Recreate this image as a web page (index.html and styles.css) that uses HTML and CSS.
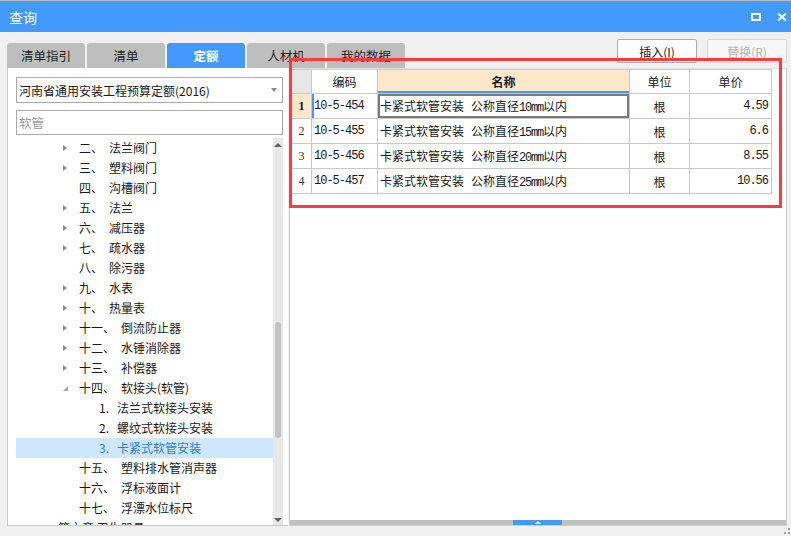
FILE: index.html
```html
<!DOCTYPE html>
<html lang="zh-CN">
<head>
<meta charset="utf-8">
<title>查询</title>
<link rel="stylesheet" href="styles.css">
</head>
<body>
<div class="window">
  <div class="titlebar">
    <span class="title">查询</span>
    <div class="win-ctrls">
      <svg class="ico" width="10" height="8" viewBox="0 0 10 8"><rect x="1" y="1" width="8" height="6" fill="none" stroke="#fff" stroke-width="2"/></svg>
      <svg class="ico" width="10" height="8" viewBox="0 0 10 8"><path d="M1 0.5 L9 7.5 M9 0.5 L1 7.5" stroke="#fff" stroke-width="2" fill="none"/></svg>
    </div>
  </div>

  <div class="toolbar">
    <div class="tabs">
      <div class="tab">清单指引</div>
      <div class="tab">清单</div>
      <div class="tab active">定额</div>
      <div class="tab">人材机</div>
      <div class="tab">我的数据</div>
    </div>
    <div class="btns">
      <button class="btn">插入(I)</button>
      <button class="btn disabled">替换(R)</button>
    </div>
  </div>

  <div class="main">
    <div class="left">
      <div class="select"><span>河南省通用安装工程预算定额(2016)</span><span class="caret"></span></div>
      <div class="search">软管</div>
      <div class="tree">
        <div class="tree-list">
          <div class="row l1"><span class="arr"></span><span class="num">二、</span><span>法兰阀门</span></div>
          <div class="row l1"><span class="arr"></span><span class="num">三、</span><span>塑料阀门</span></div>
          <div class="row l1"><span class="arr none"></span><span class="num">四、</span><span>沟槽阀门</span></div>
          <div class="row l1"><span class="arr"></span><span class="num">五、</span><span>法兰</span></div>
          <div class="row l1"><span class="arr"></span><span class="num">六、</span><span>减压器</span></div>
          <div class="row l1"><span class="arr"></span><span class="num">七、</span><span>疏水器</span></div>
          <div class="row l1"><span class="arr none"></span><span class="num">八、</span><span>除污器</span></div>
          <div class="row l1"><span class="arr"></span><span class="num">九、</span><span>水表</span></div>
          <div class="row l1"><span class="arr"></span><span class="num">十、</span><span>热量表</span></div>
          <div class="row l1"><span class="arr"></span><span class="num">十一、</span><span>倒流防止器</span></div>
          <div class="row l1"><span class="arr"></span><span class="num">十二、</span><span>水锤消除器</span></div>
          <div class="row l1"><span class="arr"></span><span class="num">十三、</span><span>补偿器</span></div>
          <div class="row l1"><span class="arr open"></span><span class="num">十四、</span><span>软接头(软管)</span></div>
          <div class="row l2"><span class="cnum">1.</span><span>法兰式软接头安装</span></div>
          <div class="row l2"><span class="cnum">2.</span><span>螺纹式软接头安装</span></div>
          <div class="row l2 selected"><span class="cnum">3.</span><span>卡紧式软管安装</span></div>
          <div class="row l1"><span class="arr none"></span><span class="num">十五、</span><span>塑料排水管消声器</span></div>
          <div class="row l1"><span class="arr none"></span><span class="num">十六、</span><span>浮标液面计</span></div>
          <div class="row l1"><span class="arr none"></span><span class="num">十七、</span><span>浮漂水位标尺</span></div>
          <div class="row l0"><span>第六章 卫生器具</span></div>
        </div>
        <div class="vscroll">
          <span class="vup"></span>
          <div class="vtrack"><div class="vthumb"></div></div>
          <span class="vdown"></span>
        </div>
      </div>
    </div>

    <div class="right">
      <table class="grid">
        <colgroup><col class="c-rn"><col class="c-code"><col class="c-name"><col class="c-unit"><col class="c-price"></colgroup>
        <thead>
          <tr><th class="rn"></th><th>编码</th><th class="name">名称</th><th>单位</th><th>单价</th></tr>
        </thead>
        <tbody>
          <tr class="cur"><td class="rn">1</td><td class="code">10-5-454</td><td class="nm">卡紧式软管安装<span class="gap"></span>公称直径<span class="lat">10mm</span>以内</td><td class="unit">根</td><td class="price">4.59</td></tr>
          <tr><td class="rn">2</td><td class="code">10-5-455</td><td class="nm">卡紧式软管安装<span class="gap"></span>公称直径<span class="lat">15mm</span>以内</td><td class="unit">根</td><td class="price">6.6</td></tr>
          <tr><td class="rn">3</td><td class="code">10-5-456</td><td class="nm">卡紧式软管安装<span class="gap"></span>公称直径<span class="lat">20mm</span>以内</td><td class="unit">根</td><td class="price">8.55</td></tr>
          <tr><td class="rn">4</td><td class="code">10-5-457</td><td class="nm">卡紧式软管安装<span class="gap"></span>公称直径<span class="lat">25mm</span>以内</td><td class="unit">根</td><td class="price">10.56</td></tr>
        </tbody>
      </table>
      <div class="fill"></div>
      <div class="hscroll"><div class="hthumb"><span class="hup"></span></div></div>
    </div>
  </div>

  <div class="redbox"></div>
  <svg class="grip" width="6" height="6" viewBox="0 0 6 6"><rect x="4" y="0" width="2" height="2" fill="#a0a0a0"/><rect x="0" y="4" width="2" height="2" fill="#a0a0a0"/><rect x="4" y="4" width="2" height="2" fill="#a0a0a0"/></svg>
</div>
</body>
</html>
```

FILE: styles.css
```css
* { box-sizing: border-box; }
html, body { margin: 0; padding: 0; }
body {
  font-family: "Noto Sans CJK SC", "Liberation Sans", sans-serif;
  font-size: 12px;
  color: #1a1a1a;
  background: #f0f0f0;
}
.window {
  position: relative;
  width: 791px;
  height: 536px;
  background: #f0f0f0;
  overflow: hidden;
  display: flex;
  flex-direction: column;
}

/* title bar */
.titlebar {
  height: 32px;
  border-top: 1px solid #b9b9b9;
  background: #4499fd;
  display: flex;
  align-items: center;
  justify-content: space-between;
  padding: 0 4px 0 9px;
  flex: none;
}
.title { color: #fff; font-size: 14px; line-height: 1; }
.win-ctrls { display: flex; gap: 16px; align-items: center; margin-top: 1px; }
.ico { display: block; }

/* toolbar */
.toolbar {
  height: 36px;
  flex: none;
  display: flex;
  justify-content: space-between;
  padding: 0 4px 0 7px;
}
.tabs { display: flex; gap: 2px; align-self: flex-end; }
.tab {
  width: 78px;
  height: 25px;
  line-height: 25px;
  text-align: center;
  background: #bebebe;
  border-radius: 3px 3px 0 0;
  color: #1e1e1e;
  font-size: 12.5px;
}
.tab.active { background: #4499fd; color: #fff; font-weight: bold; }
.btns { display: flex; gap: 10px; margin-top: 7px; align-self: flex-start; }
.btn {
  width: 80px;
  height: 24px;
  padding: 0;
  font-family: inherit;
  font-size: 12px;
  color: #1a1a1a;
  background: #fdfdfd;
  border: 1px solid #adadad;
  border-radius: 2px;
}
.btn.disabled { color: #b3b3b3; border-color: #d6d6d6; background: #f7f7f7; }

/* main area */
.main {
  height: 458px;
  flex: none;
  display: flex;
  padding: 0 4px 0 7px;
  gap: 1px;
}
.left {
  width: 281px;
  background: #fff;
  border-left: 1px solid #c6c6c6;
  border-bottom: 1px solid #c6c6c6;
  padding: 9px 5px 0 8px;
  display: flex;
  flex-direction: column;
}
.select {
  height: 26px;
  border: 1px solid #a9a9a9;
  display: flex;
  align-items: center;
  justify-content: space-between;
  padding: 0 5px 0 2px;
  font-size: 12px;
  flex: none;
}
.caret {
  width: 0; height: 0;
  border-left: 3.5px solid transparent;
  border-right: 3.5px solid transparent;
  border-top: 4px solid #8a8a8a;
}
.search {
  margin-top: 7px;
  height: 25px;
  border: 1px solid #a9a9a9;
  color: #9a9a9a;
  font-size: 12.5px;
  line-height: 23px;
  padding-left: 2px;
  flex: none;
}
.tree {
  margin-top: 3px;
  flex: 1;
  display: flex;
  min-height: 0;
}
.tree-list {
  flex: 1;
  overflow: hidden;
  padding-top: 0;
}
.row {
  height: 20px;
  line-height: 20px;
  display: flex;
  align-items: center;
  white-space: nowrap;
  color: #1a1a1a;
}
.row.l0 { padding-left: 42px; }
.row.l1 { padding-left: 46px; }
.row.l2 { padding-left: 83px; }
.arr {
  width: 17px;
  height: 20px;
  position: relative;
  flex: none;
}
.arr::before {
  content: "";
  position: absolute;
  left: 1px;
  top: 6.5px;
  border-top: 3.5px solid transparent;
  border-bottom: 3.5px solid transparent;
  border-left: 4px solid #8c8c8c;
}
.arr.none::before { display: none; }
.arr.open::before {
  left: 1px;
  top: 8px;
  border: none;
  width: 0; height: 0;
  border-left: 5px solid transparent;
  border-bottom: 5px solid #a6a6a6;
}
.num { margin-right: 6px; }
.cnum { width: 18px; flex: none; }
.row.selected { background: #cde8fd; color: #2f7de1; }

.vscroll {
  width: 10px;
  background: #e8e8e8;
  display: flex;
  flex-direction: column;
  align-items: center;
  flex: none;
}
.vup, .vdown {
  flex: none;
  width: 0; height: 0;
  border-left: 4px solid transparent;
  border-right: 4px solid transparent;
}
.vup { border-bottom: 4px solid #5f5f5f; margin-top: 5px; }
.vdown { border-top: 4px solid #5f5f5f; margin-bottom: 3px; }
.vtrack { flex: 1; width: 100%; display: flex; justify-content: center; padding-top: 175px; }
.vthumb { width: 6px; height: 116px; background: #c3c3c3; border-radius: 3px; }

/* right panel */
.right {
  width: 498px;
  background: #fff;
  border: 1px solid #cfcfcf;
  border-top-color: #e2e2e2;
  display: flex;
  flex-direction: column;
}
.grid {
  border-collapse: collapse;
  table-layout: fixed;
  width: 480px;
  margin-left: 1px;
  flex: none;
}
.c-rn { width: 20px; }
.c-code { width: 66px; }
.c-name { width: 252px; }
.c-unit { width: 60px; }
.c-price { width: 82px; }
.grid th, .grid td {
  border: 1px solid #c9c9c9;
  padding: 0;
  font-size: 12px;
  white-space: nowrap;
  overflow: hidden;
}
.grid th {
  height: 24px;
  font-weight: normal;
  text-align: center;
  background: #fff;
}
.grid th.rn { background: #e6e6e6; }
.grid th.name {
  background: #fde7c9;
  font-weight: bold;
  box-shadow: inset 0 -2px 0 #4499fd;
}
.grid td { height: 25px; }
.grid td.rn {
  text-align: center;
  font-family: "Liberation Serif", serif;
  font-size: 12px;
  color: #333;
}
.grid tr.cur td.rn { background: #fde7c9; font-weight: bold; color: #111; }
.grid td.code {
  font-family: "Liberation Mono", monospace;
  letter-spacing: -1px;
  padding-left: 2px;
}
.grid tr.cur td.code { box-shadow: inset 2px 0 0 #4499fd; }
.grid td.nm { padding-left: 2px; }
.grid tr.cur td.nm { box-shadow: inset 0 0 0 2px #7a7a7a; }
.gap { display: inline-block; width: 7px; }
.lat { font-family: "Liberation Mono", monospace; letter-spacing: -1.2px; }
.grid td.unit { text-align: center; }
.grid td.price {
  text-align: right;
  padding-right: 3px;
  font-family: "Liberation Mono", monospace;
  letter-spacing: -1px;
}
.fill { flex: 1; }
.hscroll {
  height: 5px;
  background: #bfbfbf;
  flex: none;
  display: flex;
}
.hthumb {
  margin-left: 223px;
  width: 49px;
  height: 5px;
  background: #4499fd;
  display: flex;
  justify-content: center;
  align-items: center;
}
.hup {
  width: 0; height: 0;
  border-left: 3px solid transparent;
  border-right: 3px solid transparent;
  border-bottom: 3px solid #fff;
}

/* overlays */
.redbox {
  position: absolute;
  left: 289px;
  top: 58px;
  width: 493px;
  height: 150px;
  border: 3px solid #ff3b3b;
  pointer-events: none;
}
.grip { position: absolute; right: 1px; bottom: 2px; }
```
